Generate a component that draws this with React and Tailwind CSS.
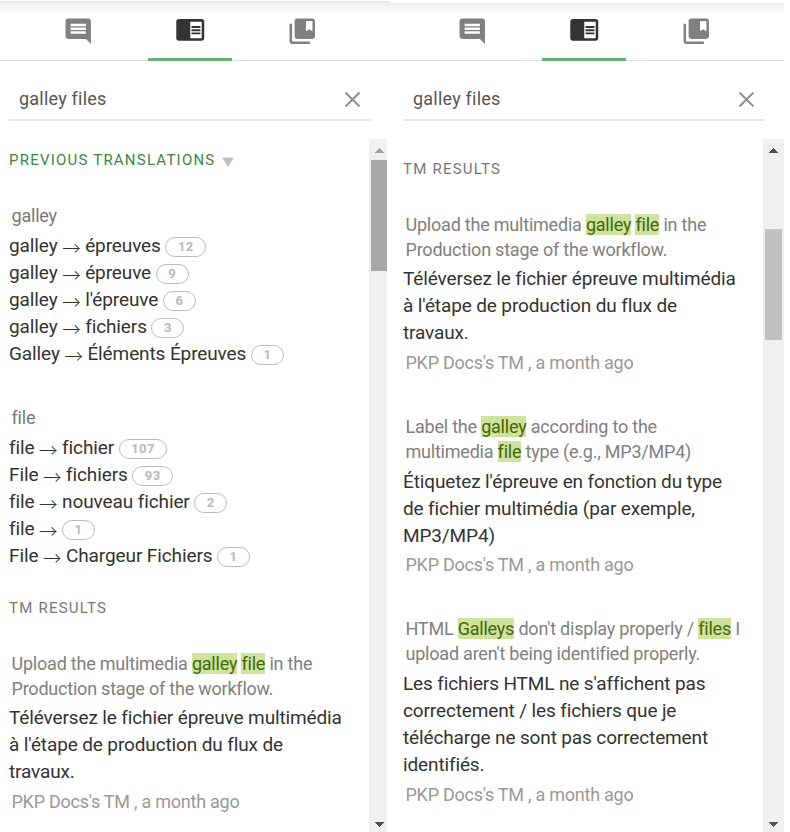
import { MdComment, MdChromeReaderMode, MdCollectionsBookmark } from "react-icons/md";

function Tabs() {
  return (
    <div className="flex h-[58px] shrink-0 border-b border-[#dedede] pl-[22px]">
      <div className="flex w-[112px] justify-center pt-[12.5px] text-[#808080]">
        <MdComment size={30.5} />
      </div>
      <div className="flex w-[112px] justify-center">
        <div className="flex h-[58px] w-[84px] justify-center border-b-3 border-[#66b270] pt-[11px] text-[#333]">
          <MdChromeReaderMode size={30.5} />
        </div>
      </div>
      <div className="flex w-[112px] justify-center pt-[12.5px] text-[#808080]">
        <MdCollectionsBookmark size={30.5} />
      </div>
    </div>
  );
}

function Search() {
  return (
    <div className="flex h-[60px] w-[362px] shrink-0 items-center justify-between border-b-2 border-[#e6e6e6] pt-[16px] pr-[11px] pl-[10px]">
      <span className="text-[18px] tracking-[0.22px] text-[#555]">galley files</span>
      <svg className="mt-[2px]" width="15" height="15" viewBox="0 0 15 15" stroke="#909090" strokeWidth="2">
        <path d="M0.5 0.5l14 14M14.5 0.5l-14 14" />
      </svg>
    </div>
  );
}

function Heading({ children, className }) {
  return <h2 className={"flex h-[20px] items-center text-[15px] tracking-[1.22px] " + className}>{children}</h2>;
}

function Group({ name, rows }) {
  return (
    <div className="mb-[38px]">
      <div className="mb-[4px] h-[25px] pl-[2.5px] text-[18px] leading-[25px] tracking-[-0.2px] text-[#777]">{name}</div>
      {rows.map(([from, to, count], i) => (
        <div key={i} className="flex h-[27px] items-center text-[19px] tracking-[-0.11px] whitespace-pre text-[#333]">
          <span className="leading-[27px]">{from} </span>
          <span className="mt-[3px] font-['Noto_Sans_CJK_JP',sans-serif] text-[18.5px] leading-[27px] font-light">→</span>
          <span className="leading-[27px]"> {to}{to && " "}</span>
          <span className="mt-[2px] flex h-[20px] items-center rounded-full border border-[#bbb] px-[11.5px] text-[13px] font-bold tracking-[0.4px] text-[#b8b8b8]">
            {count}
          </span>
        </div>
      ))}
    </div>
  );
}

function Mark({ children }) {
  return <mark className="bg-[#cfe2a0] text-[#3f6a00]">{children}</mark>;
}

function Result({ source, target, targetGap = "mt-[4px]", metaGap = "mt-[3px]" }) {
  return (
    <div className="mb-[39px]">
      <div className="pl-[2.5px] text-[18px] leading-[25px] tracking-[-0.215px] whitespace-nowrap text-[#808080]">
        {source.map((line, i) => <div key={i}>{line}</div>)}
      </div>
      <div className={"text-[19px] leading-[27px] tracking-[-0.13px] whitespace-nowrap text-[#333] " + targetGap}>
        {target.map((line, i) => <div key={i}>{line}</div>)}
      </div>
      <div className={"pl-[2.5px] text-[18px] leading-[25px] tracking-[-0.25px] text-[#999] " + metaGap}>PKP Docs's TM , a month ago</div>
    </div>
  );
}

function Upload() {
  return (
    <Result
      targetGap="mt-[3px]"
      metaGap="mt-[4px]"
      source={[<>Upload the multimedia <Mark>galley</Mark> <Mark>file</Mark> in the</>, "Production stage of the workflow."]}
      target={["Téléversez le fichier épreuve multimédia", "à l'étape de production du flux de", "travaux."]}
    />
  );
}

function Arrow({ down, color }) {
  return (
    <svg width="10" height="5" viewBox="0 0 10 5" fill={color} shapeRendering="crispEdges">
      <path d={down ? "M0 0h10l-5 5z" : "M0 5h10l-5-5z"} />
    </svg>
  );
}

export default function App() {
  return (
    <div className="flex h-[832px] w-[790px] overflow-hidden bg-white font-['Roboto',sans-serif]">
      <section className="flex w-[387px] flex-col pt-px">
        <div className="h-[2px] w-[390px] shrink-0 bg-linear-to-b from-[#e6e6e6] to-[#ececec]" />
        <div className="-mb-[12px] h-[12px] shrink-0 bg-linear-to-b from-[#efefef] to-white" />
        <Tabs />
        <div className="pl-[9px]"><Search /></div>
        <div className="mt-[18px] flex min-h-0 flex-1">
          <div className="w-[369px] pt-[11px] pl-[9px]">
            <Heading className="gap-[7px] text-[#3d8640]">
              PREVIOUS TRANSLATIONS
              <svg className="mt-[3px]" width="12" height="10" viewBox="0 0 12 10" fill="#c0c0c0"><path d="M0 0.5h12l-6 9.5z" /></svg>
            </Heading>
            <div className="mt-[33px]">
              <Group name="galley" rows={[["galley", "épreuves", 12], ["galley", "épreuve", 9], ["galley", "l'épreuve", 6], ["galley", "fichiers", 3], ["Galley", "Éléments Épreuves", 1]]} />
              <Group name="file" rows={[["file", "fichier", 107], ["File", "fichiers", 93], ["file", "nouveau fichier", 2], ["file", "", 1], ["File", "Chargeur Fichiers", 1]]} />
            </div>
            <Heading className="-mt-[9px] mb-[33px] text-[#777]">TM RESULTS</Heading>
            <Upload />
          </div>
          <div className="flex w-[18px] flex-col justify-between bg-[#f0f0f0]">
            <div className="flex flex-col items-end">
              <div className="flex h-[21px] items-center pt-[2px] pr-[3px]"><Arrow color="#a3a3a3" /></div>
              <div className="h-[111px] w-[16px] bg-[#a8a8a8]" />
            </div>
            <div className="flex justify-end pr-[3px] pb-[5px]"><Arrow down color="#505050" /></div>
          </div>
        </div>
      </section>
      <section className="flex w-[397px] flex-col pt-[3px]">
        <div className="-mb-[12px] h-[12px] shrink-0 bg-linear-to-b from-[#ededed] to-white" />
        <div className="flex h-[58px] shrink-0 border-b border-[#dedede] pl-[7px]"><Tabs /></div>
        <div className="pl-[16px]"><Search /></div>
        <div className="mt-[18px] flex min-h-0 flex-1">
          <div className="w-[376px] pt-[20px] pl-[16px]">
            <Heading className="mb-[33px] text-[#777]">TM RESULTS</Heading>
            <Upload />
            <Result
              source={[<>Label the <Mark>galley</Mark> according to the</>, <>multimedia <Mark>file</Mark> type (e.g., MP3/MP4)</>]}
              target={["Étiquetez l'épreuve en fonction du type", "de fichier multimédia (par exemple,", "MP3/MP4)"]}
            />
            <Result
              metaGap="mt-[4px]"
              source={[<>HTML <Mark>Galleys</Mark> don't display properly / <Mark>files</Mark> I</>, "upload aren't being identified properly."]}
              target={["Les fichiers HTML ne s'affichent pas", "correctement / les fichiers que je", "télécharge ne sont pas correctement", "identifiés."]}
            />
          </div>
          <div className="flex w-[21px] flex-col items-center justify-between bg-[#f0f0f0]">
            <div className="flex flex-col items-center">
              <div className="flex h-[90px] items-start pt-[9px] pr-px"><Arrow color="#505050" /></div>
              <div className="h-[111px] w-[17px] bg-[#c1c1c1]" />
            </div>
            <div className="pr-px pb-[5px]"><Arrow down color="#505050" /></div>
          </div>
        </div>
      </section>
    </div>
  );
}
